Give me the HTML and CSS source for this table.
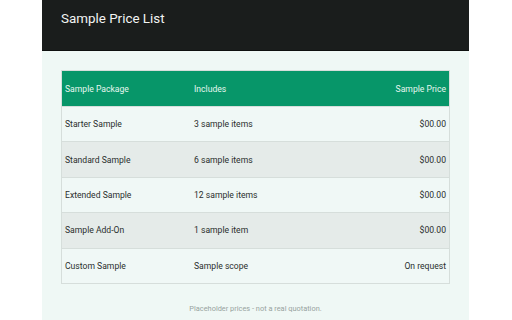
FILE: index.html
```html
<!DOCTYPE html>
<html>
<head>
<meta charset="utf-8">
<link rel="stylesheet" href="styles.css">
</head>
<body>
<div class="page">
  <header class="header">
    <h1 class="title">Sample Price List</h1>
  </header>
  <main class="content">
    <table class="prices">
      <thead>
        <tr><th class="c1">Sample Package</th><th class="c2">Includes</th><th class="c3">Sample Price</th></tr>
      </thead>
      <tbody>
        <tr><td>Starter Sample</td><td>3 sample items</td><td class="c3">$00.00</td></tr>
        <tr><td>Standard Sample</td><td>6 sample items</td><td class="c3">$00.00</td></tr>
        <tr><td>Extended Sample</td><td>12 sample items</td><td class="c3">$00.00</td></tr>
        <tr><td>Sample Add-On</td><td>1 sample item</td><td class="c3">$00.00</td></tr>
        <tr><td>Custom Sample</td><td>Sample scope</td><td class="c3">On request</td></tr>
      </tbody>
    </table>
    <p class="note">Placeholder prices - not a real quotation.</p>
  </main>
</div>
</body>
</html>
```
FILE: styles.css
```css
html, body {
  margin: 0;
  padding: 0;
  background: #ffffff;
  font-family: Roboto, "Liberation Sans", sans-serif;
}
.page {
  width: 427px;
  margin: 0 0 0 42px;
  height: 320px;
  display: flex;
  flex-direction: column;
  background: #eff8f5;
}
.header {
  background: #1a1d1c;
  height: 50px;
  border-bottom: 1px solid #0e100f;
  padding: 0 19px;
  display: flex;
  align-items: flex-start;
}
.title {
  margin: 10px 0 0;
  font-size: 13.4px;
  font-weight: 400;
  line-height: 18px;
  color: #f2f4f3;
}
.content {
  padding: 19px 19px 0;
  flex: 1;
}
.prices {
  width: 389px;
  border-collapse: collapse;
  font-size: 8.6px;
  border: 1px solid #d6dedb;
}
.prices th {
  background: #079669;
  color: #e6f6ef;
  font-weight: 400;
  height: 35px;
  padding: 0 3px;
  text-align: left;
}
.prices td {
  height: 34.4px;
  padding: 0 3px;
  color: #2a2e2d;
  border-top: 1px solid #d6dedb;
}
.prices .c1 { width: 123px; }
.prices .c3 { text-align: right; }
.prices tbody tr:nth-child(odd) td { background: #f0f8f6; }
.prices tbody tr:nth-child(even) td { background: #e5ebe9; }
.note {
  margin: 20px 0 0;
  text-align: center;
  font-size: 7.4px;
  color: #98a3a0;
}
```
